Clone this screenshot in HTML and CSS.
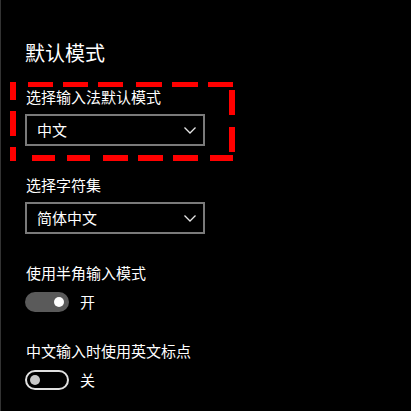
FILE: index.html
```html
<!DOCTYPE html>
<html lang="zh-CN">
<head>
<meta charset="utf-8">
<title>默认模式</title>
<link rel="stylesheet" href="styles.css">
</head>
<body>
<main class="page">
  <h1 class="title">默认模式</h1>

  <section class="field">
    <div class="label">选择输入法默认模式</div>
    <div class="select">
      <span class="select-text">中文</span>
      <svg class="chevron" width="12" height="7" viewBox="0 0 12 7"><path d="M0.5 0.5L6 6L11.5 0.5" fill="none" stroke="#e6e6e6" stroke-width="1.3"/></svg>
    </div>
  </section>

  <section class="field">
    <div class="label">选择字符集</div>
    <div class="select">
      <span class="select-text">简体中文</span>
      <svg class="chevron" width="12" height="7" viewBox="0 0 12 7"><path d="M0.5 0.5L6 6L11.5 0.5" fill="none" stroke="#e6e6e6" stroke-width="1.3"/></svg>
    </div>
  </section>

  <section class="field">
    <div class="label label-toggle">使用半角输入模式</div>
    <div class="toggle-row">
      <span class="toggle toggle-on"><span class="knob"></span></span>
      <span class="toggle-text">开</span>
    </div>
  </section>

  <section class="field field-last">
    <div class="label label-toggle">中文输入时使用英文标点</div>
    <div class="toggle-row">
      <span class="toggle toggle-off"><span class="knob"></span></span>
      <span class="toggle-text">关</span>
    </div>
  </section>

  <!-- red dashed highlight around the first setting -->
  <svg class="marker" width="240" height="170" viewBox="0 0 240 170">
    <path d="M28 84.5H53M63 84.5H88M98 84.5H123M136 84.5H162M172 84.5H198M208 84.5H233" stroke="#ff0000" stroke-width="5" fill="none"/>
    <path d="M32 158H55M67 158H90M103 158H128M138 158H163M173 158H198M210 158H233" stroke="#ff0000" stroke-width="6" fill="none"/>
    <path d="M13 82V100M13 111V136M13 147V161" stroke="#ff0000" stroke-width="6" fill="none"/>
    <path d="M232 90V115M232 127V152" stroke="#ff0000" stroke-width="6" fill="none"/>
  </svg>
</main>
</body>
</html>
```

FILE: styles.css
```css
html, body {
  margin: 0;
  padding: 0;
  background: #000;
}

.page {
  position: relative;
  box-sizing: border-box;
  width: 411px;
  height: 411px;
  padding: 39px 0 0 25px;
  border-left: 1px solid #333;
  color: #fff;
  font-family: "Noto Sans CJK SC", "Noto Sans", sans-serif;
  overflow: hidden;
}

.title {
  margin: 0 0 19px -1px;
  font-size: 20px;
  font-weight: normal;
  line-height: 28px;
}

.field {
  margin-bottom: 28px;
}

.label {
  font-size: 15px;
  line-height: 21px;
  margin-bottom: 7px;
}

.label-toggle {
  margin-bottom: 9px;
}

.select {
  box-sizing: border-box;
  width: 180px;
  height: 32px;
  margin-left: -1px;
  border: 2px solid #7a7a7a;
  display: flex;
  align-items: center;
  justify-content: space-between;
  padding: 0 7px 0 10px;
}

.select-text {
  font-size: 15px;
  line-height: 20px;
}

.chevron {
  display: block;
}

.field-last {
  margin-bottom: 0;
}

.toggle-row {
  display: flex;
  align-items: center;
  height: 20px;
  margin-left: -1px;
  margin-bottom: 20px;
}

.toggle {
  box-sizing: border-box;
  width: 44px;
  height: 20px;
  border-radius: 10px;
  display: flex;
  align-items: center;
  padding: 0 5px;
}

.toggle-on {
  background: #5a5a5a;
  justify-content: flex-end;
}

.toggle-off {
  border: 2px solid #e0e0e0;
  padding: 0 3px;
}

.knob {
  width: 10px;
  height: 10px;
  border-radius: 50%;
}

.toggle-on .knob {
  background: #fff;
}

.toggle-off .knob {
  background: #c8c8c8;
}

.toggle-text {
  margin-left: 11px;
  font-size: 15px;
  line-height: 20px;
}

.marker {
  position: absolute;
  left: -1px;
  top: 0;
}
```
